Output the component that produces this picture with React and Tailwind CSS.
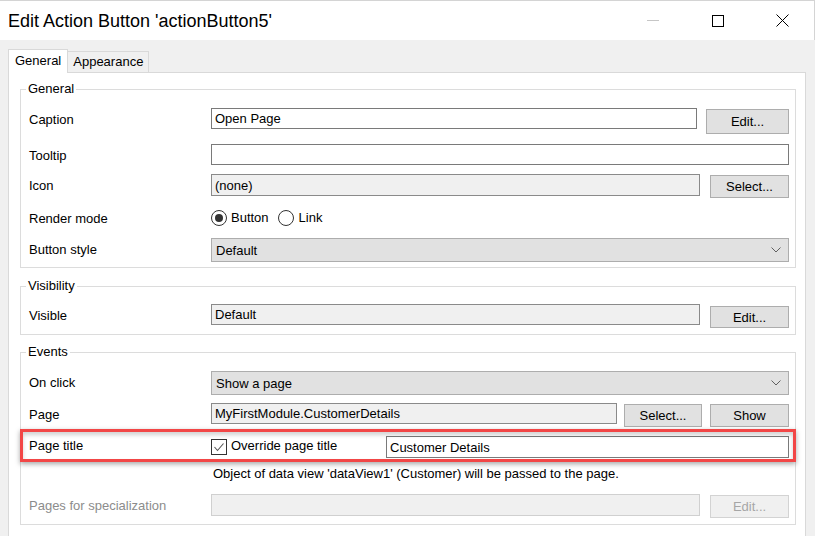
import React from 'react';

// Small building blocks for the classic Windows form look
const Btn = ({ children, className = '', disabled = false }) => (
  <div
    className={`flex items-center justify-center border text-[13px] leading-none ${
      disabled ? 'bg-[#f0f0f0] border-[#d3d3d3] text-[#a6a6a6]' : 'bg-[#e1e1e1] border-[#adadad] text-black'
    } ${className}`}
  >
    {children}
  </div>
);

const Field = ({ value, className = '' }) => (
  <div className={`flex items-center border px-[3px] text-[13px] leading-none ${className}`}>{value}</div>
);

const Chevron = () => (
  <svg width="10" height="6" viewBox="0 0 10 6" className="mr-[7px]">
    <polyline points="0.5,0.5 5,5 9.5,0.5" fill="none" stroke="#606060" strokeWidth="1" />
  </svg>
);

const Select = ({ value }) => (
  <div className="flex h-[24px] flex-1 items-center justify-between border border-[#adadad] bg-[#e1e1e1] pl-[4px] text-[13px] leading-none">
    <span>{value}</span>
    <Chevron />
  </div>
);

const Label = ({ children, muted = false }) => (
  <div className={`w-[182px] shrink-0 pt-[4px] leading-[16px] ${muted ? 'text-[#8c8c8c]' : 'text-black'}`}>{children}</div>
);

const Group = ({ title, className = '', children }) => (
  <fieldset className={`ml-[11px] mr-[9px] border border-[#dcdcdc] pl-[8px] pr-[6px] ${className}`}>
    <legend className="-ml-[3px] px-[2px] leading-[16px] text-black">{title}</legend>
    {children}
  </fieldset>
);

const Radio = ({ checked }) => (
  <div className="flex h-[16px] w-[16px] items-center justify-center rounded-full border border-[#333] bg-white">
    {checked && <div className="h-[8px] w-[8px] rounded-full bg-[#333]" />}
  </div>
);

const App = () => {
  return (
    <div className="h-[536px] w-[815px] overflow-hidden border-t border-[#d4d4d4] bg-[#f0f0f0] font-['Liberation_Sans',Arial,sans-serif] text-[13px] text-black">
      {/* Title bar */}
      <div className="flex h-[39px] items-center bg-white">
        <div className="pl-[8px] text-[18px] leading-none text-black">Edit Action Button 'actionButton5'</div>
        <div className="ml-auto flex h-full">
          <div className="flex w-[65px] items-center justify-center">
            <div className="h-px w-[12px] bg-[#c6c6c6]" />
          </div>
          <div className="flex w-[65px] items-center justify-center">
            <div className="h-[12px] w-[12px] border border-black" />
          </div>
          <div className="flex w-[65px] items-center justify-center border-r border-[#d4d4d4]">
            <svg width="13" height="13" viewBox="0 0 13 13">
              <path d="M0.5 0.5 L12.5 12.5 M12.5 0.5 L0.5 12.5" stroke="#000" strokeWidth="1" fill="none" />
            </svg>
          </div>
        </div>
      </div>

      {/* Body */}
      <div className="pl-[8px] pr-[9px] pt-[9px]">
        {/* Tabs */}
        <div className="relative z-10 -mb-px flex items-end">
          <div className="flex h-[24px] items-start border-x border-t border-[#d9d9d9] bg-white px-[6px] pt-[3px] leading-[16px]">
            General
          </div>
          <div className="mb-px flex h-[21px] items-start border-t border-r border-[#d9d9d9] bg-[#f0f0f0] px-[5px] pt-[2px] leading-[16px]">
            Appearance
          </div>
        </div>

        {/* Tab panel */}
        <div className="h-[480px] border border-[#d9d9d9] bg-white pt-[8px]">
          <Group title="General" className="pb-[5px]">
            <div className="mt-[11px] flex h-[26px] items-start">
              <Label>Caption</Label>
              <Field value="Open Page" className="h-[21px] w-[486px] border-[#7a7a7a] bg-white" />
              <Btn className="ml-[9px] mt-[1px] h-[25px] flex-1">Edit...</Btn>
            </div>
            <div className="mt-[10px] flex h-[21px] items-start">
              <Label>Tooltip</Label>
              <Field value="" className="h-[21px] flex-1 border-[#7a7a7a] bg-white" />
            </div>
            <div className="mt-[9px] flex h-[24px] items-start">
              <Label>Icon</Label>
              <Field value="(none)" className="h-[22px] w-[489px] border-[#8a8a8a] bg-[#f0f0f0]" />
              <Btn className="ml-[10px] mt-[1px] h-[23px] flex-1">Select...</Btn>
            </div>
            <div className="mt-[10px] flex h-[20px] items-center">
              <div className="w-[182px] shrink-0 pt-[2px] leading-[16px]">Render mode</div>
              <Radio checked />
              <span className="ml-[4px] leading-[16px]">Button</span>
              <div className="ml-[9px]">
                <Radio />
              </div>
              <span className="ml-[5px] leading-[16px]">Link</span>
            </div>
            <div className="mt-[10px] flex h-[24px] items-start">
              <Label>Button style</Label>
              <Select value="Default" />
            </div>
          </Group>

          <Group title="Visibility" className="mt-[10px] pb-[6px]">
            <div className="mt-[10px] flex h-[24px] items-start">
              <Label>Visible</Label>
              <Field value="Default" className="h-[21px] w-[489px] border-[#8a8a8a] bg-[#f0f0f0]" />
              <Btn className="ml-[10px] mt-[2px] h-[22px] flex-1">Edit...</Btn>
            </div>
          </Group>

          <Group title="Events" className="mt-[9px] pb-[6px]">
            <div className="mt-[11px] flex h-[23px] items-start">
              <Label>On click</Label>
              <div className="flex h-[23px] flex-1">
                <Select value="Show a page" />
              </div>
            </div>
            <div className="mt-[9px] flex h-[24px] items-start">
              <Label>Page</Label>
              <Field value="MyFirstModule.CustomerDetails" className="h-[21px] w-[406px] border-[#8a8a8a] bg-[#f0f0f0]" />
              <Btn className="ml-[7px] mt-[1px] h-[23px] w-[78px]">Select...</Btn>
              <Btn className="ml-[8px] mt-[1px] h-[23px] flex-1">Show</Btn>
            </div>
            <div className="relative mt-[9px] flex h-[22px] items-start">
              <div className="w-[182px] shrink-0 pt-[2px] leading-[16px]">Page title</div>
              <div className="mt-[3px] flex h-[16px] w-[16px] items-center justify-center border border-[#333] bg-white">
                <svg width="12" height="12" viewBox="0 0 12 12">
                  <polyline points="1.5,6 4.5,9.5 10.5,2.5" fill="none" stroke="#555" strokeWidth="1.1" />
                </svg>
              </div>
              <span className="ml-[4px] pt-[2px] leading-[16px]">Override page title</span>
              <Field value="Customer Details" className="ml-auto h-[22px] w-[403px] border-[#7a7a7a] bg-white" />
              {/* highlight frame laid over the row */}
              <div className="pointer-events-none absolute -top-[7px] -bottom-[4px] -left-[9px] -right-[7px] border-[3px] border-[#f24646] shadow-[0_2px_5px_rgba(0,0,0,0.35),inset_0_3px_4px_rgba(0,0,0,0.18)]" />
            </div>
            <div className="mt-[8px] flex h-[16px] items-center">
              <div className="w-[184px] shrink-0" />
              <span className="leading-[16px]">Object of data view 'dataView1' (Customer) will be passed to the page.</span>
            </div>
            <div className="mt-[12px] flex h-[24px] items-start">
              <Label muted>Pages for specialization</Label>
              <Field value="" className="h-[22px] w-[489px] border-[#d0d0d0] bg-[#f0f0f0]" />
              <Btn disabled className="ml-[10px] mt-[1px] h-[23px] flex-1">Edit...</Btn>
            </div>
          </Group>
        </div>
      </div>
    </div>
  );
};

export default App;
